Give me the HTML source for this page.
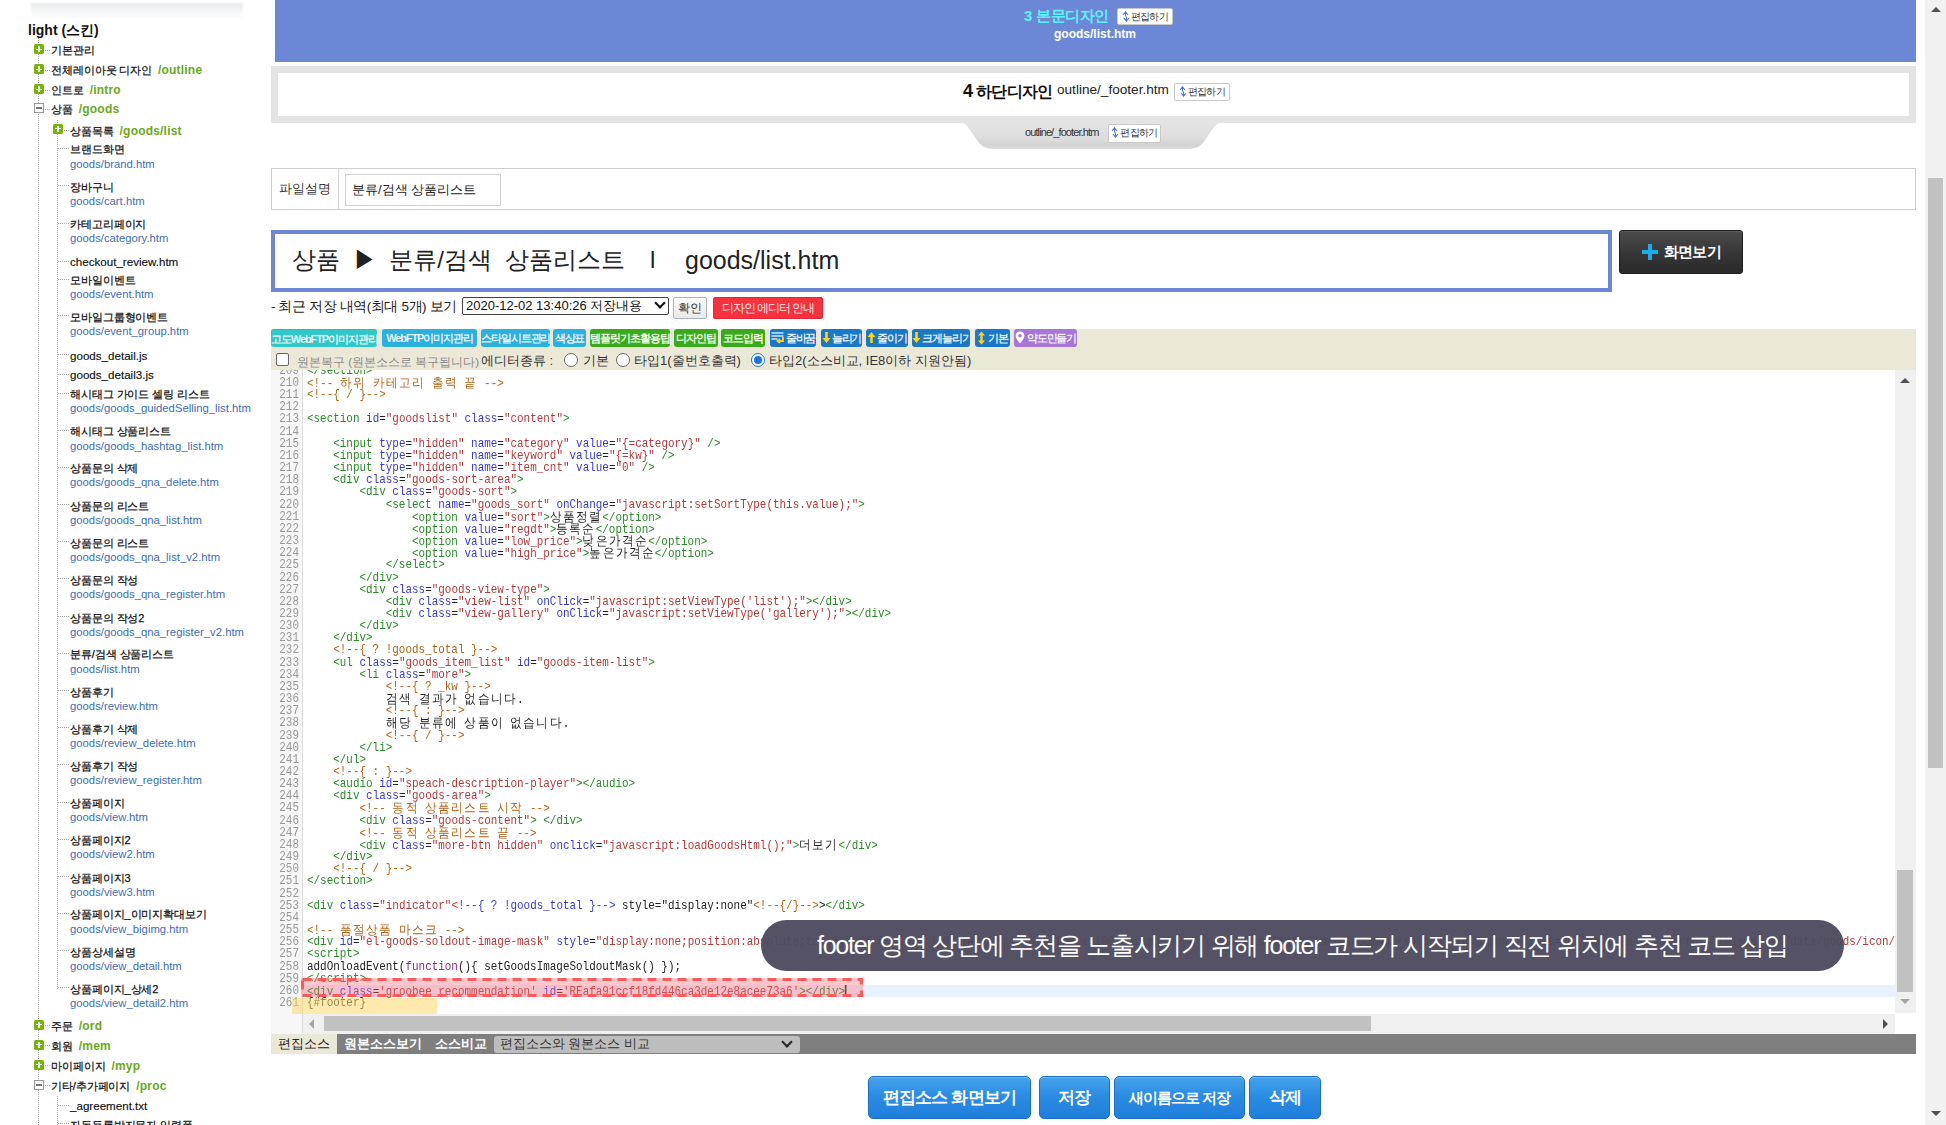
<!DOCTYPE html>
<html lang="ko">
<head>
<meta charset="utf-8">
<title>design editor</title>
<style>
*{box-sizing:border-box;margin:0;padding:0}
html,body{width:1946px;height:1125px;overflow:hidden;background:#fff}
body{position:relative;font-family:"Liberation Sans",sans-serif;color:#222}
.abs{position:absolute}
/* sidebar */
#shadow{position:absolute;left:31px;top:3px;width:212px;height:15px;background:linear-gradient(#e9eaeb,#eeeff0 30%,#f7f7f8 65%,#fdfdfd);filter:blur(1.2px)}
#skin{position:absolute;left:28px;top:21px;font-size:14px;font-weight:bold;color:#111;line-height:18px;white-space:nowrap}
.vl{position:absolute;border-left:1px dotted #a8a8a8;width:0}
.hd{position:absolute;border-top:1px dotted #a8a8a8;height:0}
.ic{position:absolute;width:10px;height:10px}
.ic.plus{background:#74b40c;border-radius:1.5px}
.ic.plus:before{content:"";position:absolute;left:2px;top:4.5px;width:6px;height:1.3px;background:#f4ffe8}
.ic.plus:after{content:"";position:absolute;left:4.4px;top:2px;width:1.3px;height:6px;background:#f4ffe8}
.ic.minus{background:#fff;border:1px solid #999}
.ic.minus:before{content:"";position:absolute;left:1px;top:3px;width:6px;height:2px;background:#777}
.st{position:absolute;white-space:nowrap;line-height:16px}
.n1{font-size:11px;color:#111;letter-spacing:-0.1px;-webkit-text-stroke:0.25px #111}
.gp{color:#6aa81c;font-weight:bold;font-size:12px;letter-spacing:0.2px;margin-left:3px;-webkit-text-stroke:0}
.n2{font-size:11px;color:#111;letter-spacing:-0.1px;-webkit-text-stroke:0.25px #111}
.n3{font-size:11.6px;color:#111;-webkit-text-stroke:0.15px #111}
.fn{font-size:11.3px;color:#3f6eb3;line-height:14px}

/* main */
#blue{position:absolute;left:275px;top:0;width:1641px;height:62px;background:#6c87d6}
#h3t{position:absolute;left:1024px;top:6px;font-size:15px;font-weight:bold;color:#5ef2ff;white-space:nowrap;line-height:20px;letter-spacing:-0.4px}
.edbtn{position:absolute;background:#fff;border:1px solid #c8c8c8;border-radius:2px;font-size:9.5px;color:#333;line-height:15px;white-space:nowrap;text-align:center;letter-spacing:-0.6px;overflow:hidden}
.edbtn i{font-style:normal;color:#5b7bd8;font-size:9px}
#h3f{position:absolute;left:1054px;top:26px;font-size:12px;font-weight:bold;color:#fff;white-space:nowrap;line-height:16px}
#gframe{position:absolute;left:271px;top:66px;width:1645px;height:57px;border:7px solid #e4e4e4;background:#fff}
#h4t{position:absolute;left:963px;top:81px;font-size:16px;font-weight:bold;color:#111;white-space:nowrap;line-height:20px;letter-spacing:-0.7px}
#h4f{position:absolute;left:1057px;top:82px;font-size:13.6px;color:#222;white-space:nowrap;line-height:16px}
#tabt{position:absolute;left:1025px;top:125px;font-size:11px;color:#333;letter-spacing:-0.9px;white-space:nowrap;line-height:14px}

#fdesc{position:absolute;left:271px;top:168px;width:1645px;height:42px;border:1px solid #cfcfcf;background:#fff}
#fdesc .lab{position:absolute;left:0;top:0;width:67px;height:40px;border-right:1px solid #d6d6d6;font-size:13px;color:#333;line-height:40px;padding-left:7px}
#fdesc .inp{position:absolute;left:73px;top:5px;width:156px;height:32px;border:1px solid #d2d2d2;font-size:13px;color:#222;line-height:30px;padding-left:6px;white-space:nowrap}

#title{position:absolute;left:271px;top:230px;width:1341px;height:62px;border:4px solid #6c87d6;background:#fff}
#title .t{position:absolute;left:17px;top:12px;font-size:24px;color:#222;white-space:nowrap;line-height:28px;word-spacing:6px}
#viewbtn{position:absolute;left:1619px;top:230px;width:124px;height:44px;border:1px solid #1e1e1e;border-radius:3px;background:linear-gradient(#4c4c4c,#353535 55%,#2b2b2b);box-shadow:inset 0 1px 0 #5a5a5a}
#viewbtn .p{position:absolute;left:22px;top:13px;width:16px;height:16px}
#viewbtn .p:before{content:"";position:absolute;left:6px;top:0;width:4px;height:16px;background:#1aaef0}
#viewbtn .p:after{content:"";position:absolute;left:0;top:6px;width:16px;height:4px;background:#1aaef0}
#viewbtn .tx{position:absolute;left:44px;top:11px;letter-spacing:-0.8px;font-size:15px;font-weight:bold;color:#fff;line-height:20px;white-space:nowrap}

#recent{position:absolute;left:271px;top:298px;letter-spacing:-0.4px;font-size:13.5px;color:#222;white-space:nowrap;line-height:18px}
#sel{position:absolute;left:462px;top:297px;width:207px;height:18px;border:1px solid #444;border-radius:2px;background:#fff;font-size:13px;letter-spacing:0;overflow:hidden;line-height:16px;padding-left:3px;white-space:nowrap;color:#111}
#sel .chev{position:absolute;right:4px;top:4px;width:8px;height:8px;border-right:2px solid #111;border-bottom:2px solid #111;transform:rotate(45deg);top:1px}
#okbtn{position:absolute;left:673px;top:297px;width:34px;height:22px;border:1px solid #a9b3bf;border-radius:2px;background:linear-gradient(#fbfbfb,#e9e9e9);font-size:12px;color:#333;line-height:20px;text-align:center}
#redbtn{position:absolute;left:713px;top:297px;width:110px;height:22px;background:#f5323e;border:1px solid #e02632;border-radius:2px;font-size:12px;color:#ffe8e8;line-height:20px;text-align:center;white-space:nowrap;letter-spacing:-1px;overflow:hidden}

#beige{position:absolute;left:271px;top:329px;width:1645px;height:41px;background:#ebe8d8}
.tb{position:absolute;top:329px;height:18px;border-radius:3px;color:rgba(255,255,255,0.88);font-size:11px;font-weight:bold;line-height:18px;text-align:center;white-space:nowrap;letter-spacing:-1.1px;overflow:hidden}
.tb.c1{background:#33c8c8;border-top:1px solid #22bfc0}
.tb.c2{background:#2cb0dd}
.tb.c3{background:#3aaa1c;color:#eaffe0}
.tb.c4{background:#1a78c6}
.tb.c5{background:#a677d4}
.tb .ar{color:#ffd21a;font-weight:bold}

#ckrow{position:absolute;left:271px;top:348px;height:22px;width:800px;white-space:nowrap}
#cb{position:absolute;left:5px;top:5px;width:13px;height:13px;border:1px solid #666;border-radius:2px;background:#fff}
#ckrow .g{position:absolute;left:26px;top:4.5px;font-size:11.5px;color:#8a8a8a;line-height:18px}
#ckrow .k{position:absolute;top:3.5px;font-size:13px;color:#333;line-height:18px}
.rd{position:absolute;top:5px;width:14px;height:14px;border:1px solid #666;border-radius:50%;background:#fff}
.rd.on{border-color:#1a73e8;border-width:1px}
.rd.on:after{content:"";position:absolute;left:2px;top:2px;width:8px;height:8px;border-radius:50%;background:#1a73e8}

/* editor */
#editor{position:absolute;left:271px;top:370px;width:1645px;height:664px;background:#fff;overflow:hidden}
#gutter{position:absolute;left:0;top:0;width:32px;height:664px;background:#f7f7f7;border-right:1px solid #ddd}
#gnums{position:absolute;left:0;top:-5.15px;width:28px;text-align:right}
.gn{height:12.17px;line-height:12.17px;font-family:"Liberation Mono",monospace;font-size:13.5px;color:#999;transform:scaleX(0.81);transform-origin:100% 0}
#codewrap{position:absolute;left:36.2px;top:-5.15px;transform:scaleX(0.81);transform-origin:0 0}
.ln{height:12.17px;line-height:12.17px;font-family:"Liberation Mono",monospace;font-size:13.5px;color:#222;white-space:pre}
.ln b.w{display:inline-block;width:16.2px;font-weight:normal;text-align:left;font-family:"Liberation Sans",sans-serif;font-size:12.5px;transform:scaleX(1.1);transform-origin:0 0}
.cur{display:inline-block;width:1.6px;height:11px;background:#222;vertical-align:-1px}
.t{color:#2a8a2a}.a{color:#3a3ad0}.s{color:#b33a3a}.c{color:#b06418}.k{color:#83308a}.e{color:#f22}
#actline{position:absolute;left:32px;top:615px;width:1592px;height:12px;background:#e8f2ff}
#vscroll{position:absolute;left:1624px;top:0;width:21px;height:643px;background:#f0f0f0}
#vthumb{position:absolute;left:2px;top:500px;width:16px;height:122px;background:#c1c1c1}
.tri-up{position:absolute;width:0;height:0;border-left:5px solid transparent;border-right:5px solid transparent;border-bottom:5px solid #505050}
.tri-dn{position:absolute;width:0;height:0;border-left:5px solid transparent;border-right:5px solid transparent;border-top:5px solid #a3a3a3}
#hscroll{position:absolute;left:32px;top:644px;width:1592px;height:20px;background:#f0f0f0}
#hthumb{position:absolute;left:21px;top:2px;width:1047px;height:15px;background:#c1c1c1}
.tri-l{position:absolute;width:0;height:0;border-top:5px solid transparent;border-bottom:5px solid transparent;border-right:5px solid #a3a3a3}
.tri-r{position:absolute;width:0;height:0;border-top:5px solid transparent;border-bottom:5px solid transparent;border-left:5px solid #505050}

#redbox{position:absolute;left:301px;top:978px;width:562px;height:19px;background:rgba(255,110,120,0.38)}
#redbox svg{position:absolute;left:0;top:0}
#yel{position:absolute;left:292px;top:998px;width:145px;height:16px;background:rgba(253,216,110,0.55)}
#pill{position:absolute;left:761px;top:920px;width:1083px;height:51px;border-radius:26px;background:rgba(77,75,94,0.96)}
#pill .tx{position:absolute;left:56px;top:9.5px;font-size:25px;color:#fff;white-space:nowrap;line-height:30px;letter-spacing:-1.25px}

/* bottom bar */
#bbar{position:absolute;left:271px;top:1034px;width:1645px;height:20px;background:#7f7f7f}
#bbar .tab1{position:absolute;left:0;top:0;width:66px;height:20px;background:#ebe8d8;font-size:13px;color:#222;line-height:20px;padding-left:7px;white-space:nowrap}
#bbar .tab{position:absolute;top:0;font-size:13px;font-weight:bold;color:#fff;line-height:20px;white-space:nowrap}
#bsel{position:absolute;left:223px;top:2px;width:306px;height:17px;border-radius:3px;background:#bdbdbd;font-size:12.5px;color:#333;line-height:17px;padding-left:6px;white-space:nowrap}
#bsel .chev{position:absolute;right:9px;top:2px;width:8px;height:8px;border-right:2px solid #222;border-bottom:2px solid #222;transform:rotate(45deg)}

.bb{position:absolute;top:1076px;height:43px;border:1px solid #1d6fc4;border-radius:5px;background:linear-gradient(#46a4ec,#2b8ce3 45%,#1f7fdc);box-shadow:inset 0 1px 0 #6ab8f2;color:#fff;font-weight:bold;font-size:17px;line-height:41px;text-align:center;white-space:nowrap;letter-spacing:-0.8px;overflow:hidden}

/* page scrollbar */
#pscroll{position:absolute;left:1925px;top:0;width:21px;height:1125px;background:#f1f1f1}
#pthumb{position:absolute;left:3px;top:178px;width:15px;height:590px;background:#c1c1c1}
</style>
</head>
<body>
<div id="shadow"></div>
<div id="skin">light (스킨)</div>
<div class="vl" style="left:38px;top:38px;height:1087px"></div>
<div class="vl" style="left:57px;top:120px;height:869px"></div>
<div class="vl" style="left:57px;top:1096px;height:29px"></div>
<div class="ic plus" style="left:34px;top:44.2px"></div>
<div class="hd" style="left:45px;top:49.7px;width:5px"></div>
<div class="st n1" style="left:51px;top:42.2px">기본관리</div>
<div class="ic plus" style="left:34px;top:64.2px"></div>
<div class="hd" style="left:45px;top:69.7px;width:5px"></div>
<div class="st n1" style="left:51px;top:62.2px">전체레이아웃 디자인 <span class="gp">/outline</span></div>
<div class="ic plus" style="left:34px;top:84.2px"></div>
<div class="hd" style="left:45px;top:89.7px;width:5px"></div>
<div class="st n1" style="left:51px;top:82.2px">인트로 <span class="gp">/intro</span></div>
<div class="ic minus" style="left:34px;top:103.4px"></div>
<div class="hd" style="left:45px;top:108.9px;width:5px"></div>
<div class="st n1" style="left:51px;top:101.4px">상품 <span class="gp">/goods</span></div>
<div class="ic plus" style="left:53px;top:123.7px"></div>
<div class="hd" style="left:64px;top:129.7px;width:5px"></div>
<div class="st n1" style="left:70px;top:122.7px">상품목록 <span class="gp">/goods/list</span></div>
<div class="hd" style="left:58px;top:147.8px;width:11px"></div>
<div class="st n2" style="left:70px;top:141.3px">브랜드화면</div>
<div class="st fn" style="left:70px;top:156.5px">goods/brand.htm</div>
<div class="hd" style="left:58px;top:185.2px;width:11px"></div>
<div class="st n2" style="left:70px;top:178.7px">장바구니</div>
<div class="st fn" style="left:70px;top:193.9px">goods/cart.htm</div>
<div class="hd" style="left:58px;top:222.5px;width:11px"></div>
<div class="st n2" style="left:70px;top:216.0px">카테고리페이지</div>
<div class="st fn" style="left:70px;top:231.2px">goods/category.htm</div>
<div class="hd" style="left:58px;top:260.6px;width:11px"></div>
<div class="st n3" style="left:70px;top:254.1px">checkout_review.htm</div>
<div class="hd" style="left:58px;top:278.5px;width:11px"></div>
<div class="st n2" style="left:70px;top:272.0px">모바일이벤트</div>
<div class="st fn" style="left:70px;top:287.2px">goods/event.htm</div>
<div class="hd" style="left:58px;top:315.2px;width:11px"></div>
<div class="st n2" style="left:70px;top:308.7px">모바일그룹형이벤트</div>
<div class="st fn" style="left:70px;top:323.9px">goods/event_group.htm</div>
<div class="hd" style="left:58px;top:354.4px;width:11px"></div>
<div class="st n3" style="left:70px;top:347.9px">goods_detail.js</div>
<div class="hd" style="left:58px;top:373.8px;width:11px"></div>
<div class="st n3" style="left:70px;top:367.3px">goods_detail3.js</div>
<div class="hd" style="left:58px;top:392.5px;width:11px"></div>
<div class="st n2" style="left:70px;top:386.0px">해시태그 가이드 셀링 리스트</div>
<div class="st fn" style="left:70px;top:401.2px">goods/goods_guidedSelling_list.htm</div>
<div class="hd" style="left:58px;top:429.8px;width:11px"></div>
<div class="st n2" style="left:70px;top:423.3px">해시태그 상품리스트</div>
<div class="st fn" style="left:70px;top:438.5px">goods/goods_hashtag_list.htm</div>
<div class="hd" style="left:58px;top:466.6px;width:11px"></div>
<div class="st n2" style="left:70px;top:460.1px">상품문의 삭제</div>
<div class="st fn" style="left:70px;top:475.3px">goods/goods_qna_delete.htm</div>
<div class="hd" style="left:58px;top:504.0px;width:11px"></div>
<div class="st n2" style="left:70px;top:497.5px">상품문의 리스트</div>
<div class="st fn" style="left:70px;top:512.7px">goods/goods_qna_list.htm</div>
<div class="hd" style="left:58px;top:541.3px;width:11px"></div>
<div class="st n2" style="left:70px;top:534.8px">상품문의 리스트</div>
<div class="st fn" style="left:70px;top:550.0px">goods/goods_qna_list_v2.htm</div>
<div class="hd" style="left:58px;top:578.3px;width:11px"></div>
<div class="st n2" style="left:70px;top:571.8px">상품문의 작성</div>
<div class="st fn" style="left:70px;top:587.0px">goods/goods_qna_register.htm</div>
<div class="hd" style="left:58px;top:616.0px;width:11px"></div>
<div class="st n2" style="left:70px;top:609.5px">상품문의 작성2</div>
<div class="st fn" style="left:70px;top:624.7px">goods/goods_qna_register_v2.htm</div>
<div class="hd" style="left:58px;top:652.8px;width:11px"></div>
<div class="st n2" style="left:70px;top:646.3px">분류/검색 상품리스트</div>
<div class="st fn" style="left:70px;top:661.5px">goods/list.htm</div>
<div class="hd" style="left:58px;top:690.0px;width:11px"></div>
<div class="st n2" style="left:70px;top:683.5px">상품후기</div>
<div class="st fn" style="left:70px;top:698.7px">goods/review.htm</div>
<div class="hd" style="left:58px;top:727.0px;width:11px"></div>
<div class="st n2" style="left:70px;top:720.5px">상품후기 삭제</div>
<div class="st fn" style="left:70px;top:735.7px">goods/review_delete.htm</div>
<div class="hd" style="left:58px;top:764.4px;width:11px"></div>
<div class="st n2" style="left:70px;top:757.9px">상품후기 작성</div>
<div class="st fn" style="left:70px;top:773.1px">goods/review_register.htm</div>
<div class="hd" style="left:58px;top:801.5px;width:11px"></div>
<div class="st n2" style="left:70px;top:795.0px">상품페이지</div>
<div class="st fn" style="left:70px;top:810.2px">goods/view.htm</div>
<div class="hd" style="left:58px;top:838.7px;width:11px"></div>
<div class="st n2" style="left:70px;top:832.2px">상품페이지2</div>
<div class="st fn" style="left:70px;top:847.4px">goods/view2.htm</div>
<div class="hd" style="left:58px;top:876.0px;width:11px"></div>
<div class="st n2" style="left:70px;top:869.5px">상품페이지3</div>
<div class="st fn" style="left:70px;top:884.7px">goods/view3.htm</div>
<div class="hd" style="left:58px;top:912.9px;width:11px"></div>
<div class="st n2" style="left:70px;top:906.4px">상품페이지_이미지확대보기</div>
<div class="st fn" style="left:70px;top:921.6px">goods/view_bigimg.htm</div>
<div class="hd" style="left:58px;top:950.2px;width:11px"></div>
<div class="st n2" style="left:70px;top:943.7px">상품상세설명</div>
<div class="st fn" style="left:70px;top:958.9px">goods/view_detail.htm</div>
<div class="hd" style="left:58px;top:987.2px;width:11px"></div>
<div class="st n2" style="left:70px;top:980.7px">상품페이지_상세2</div>
<div class="st fn" style="left:70px;top:995.9px">goods/view_detail2.htm</div>
<div class="ic plus" style="left:34px;top:1019.5px"></div>
<div class="hd" style="left:45px;top:1025.0px;width:5px"></div>
<div class="st n1" style="left:51px;top:1017.5px">주문 <span class="gp">/ord</span></div>
<div class="ic plus" style="left:34px;top:1039.5px"></div>
<div class="hd" style="left:45px;top:1045.0px;width:5px"></div>
<div class="st n1" style="left:51px;top:1037.5px">회원 <span class="gp">/mem</span></div>
<div class="ic plus" style="left:34px;top:1059.5px"></div>
<div class="hd" style="left:45px;top:1065.0px;width:5px"></div>
<div class="st n1" style="left:51px;top:1057.5px">마이페이지 <span class="gp">/myp</span></div>
<div class="ic minus" style="left:34px;top:1079.6px"></div>
<div class="hd" style="left:45px;top:1085.1px;width:5px"></div>
<div class="st n1" style="left:51px;top:1077.6px">기타/추가페이지 <span class="gp">/proc</span></div>
<div class="hd" style="left:58px;top:1104.6px;width:11px"></div>
<div class="st n3" style="left:70px;top:1098.1px">_agreement.txt</div>
<div class="hd" style="left:58px;top:1123.0px;width:11px"></div>
<div class="st n2" style="left:70px;top:1116.5px">자동등록방지문자 입력폼</div>

<div id="blue"></div>
<div id="h3t"><span style="margin-right:4px">3</span>본문디자인</div>
<div class="edbtn" style="left:1117px;top:8px;width:56px;height:17px"><svg width="8" height="11" style="vertical-align:-2px;margin-right:1px"><path d="M1,4 L3.5,0.8 L6,4 M3.5,1 v4.5 M2,7 L4.5,10.2 L7,7 M4.5,10 v-4.5" stroke="#4f78d8" stroke-width="1.1" fill="none"/></svg>편집하기</div>
<div id="h3f">goods/list.htm</div>

<div id="gframe"></div>
<div id="h4t"><span style="margin-right:3px;font-size:18px;letter-spacing:0">4</span>하단디자인</div>
<div id="h4f">outline/_footer.htm</div>
<div class="edbtn" style="left:1174px;top:83px;width:56px;height:18px"><svg width="8" height="11" style="vertical-align:-2px;margin-right:1px"><path d="M1,4 L3.5,0.8 L6,4 M3.5,1 v4.5 M2,7 L4.5,10.2 L7,7 M4.5,10 v-4.5" stroke="#4f78d8" stroke-width="1.1" fill="none"/></svg>편집하기</div>
<svg style="position:absolute;left:950px;top:121px" width="290" height="32"><defs><linearGradient id="tg" x1="0" y1="0" x2="0" y2="1"><stop offset="0" stop-color="#e4e4e4"/><stop offset="0.55" stop-color="#dedede"/><stop offset="0.85" stop-color="#d3d3d3"/><stop offset="1" stop-color="#dcdcdc"/></linearGradient><filter id="tb1" x="-5%" y="-20%" width="110%" height="140%"><feGaussianBlur stdDeviation="0.6"/></filter></defs><path d="M9,1 L276,1 C268,1 265,4 259,13 C253,23 249,28 238,28 L44,28 C33,28 29,23 23,13 C17,4 14,1 9,1 Z" fill="url(#tg)" filter="url(#tb1)"/></svg>
<div id="tabt">outline/_footer.htm</div>
<div class="edbtn" style="left:1108px;top:124px;width:53px;height:19px"><svg width="8" height="11" style="vertical-align:-2px;margin-right:1px"><path d="M1,4 L3.5,0.8 L6,4 M3.5,1 v4.5 M2,7 L4.5,10.2 L7,7 M4.5,10 v-4.5" stroke="#4f78d8" stroke-width="1.1" fill="none"/></svg>편집하기</div>

<div id="fdesc"><div class="lab">파일설명</div><div class="inp">분류/검색 상품리스트</div></div>

<div id="title"><div class="t">상품 ▶ 분류/검색 상품리스트 &nbsp;l</div><div class="t" style="left:410px;font-size:25px;word-spacing:0">goods/list.htm</div></div>
<div id="viewbtn"><div class="p"></div><div class="tx">화면보기</div></div>

<div id="recent">- 최근 저장 내역(최대 5개) 보기</div>
<div id="sel">2020-12-02 13:40:26 저장내용<div class="chev"></div></div>
<div id="okbtn">확인</div>
<div id="redbtn">디자인 에디터 안내</div>

<div id="beige"></div>
<div class="tb c1" style="left:271px;width:106px">고도WebFTP이미지관리</div>
<div class="tb c2" style="left:382px;width:95px">WebFTP이미지관리</div>
<div class="tb c2" style="left:481px;width:69px">스타일시트관리</div>
<div class="tb c2" style="left:553px;width:33px">색상표</div>
<div class="tb c3" style="left:590px;width:80px">템플릿기초활용팁</div>
<div class="tb c3" style="left:674px;width:44px">디자인팁</div>
<div class="tb c3" style="left:721px;width:44px">코드입력</div>
<div class="tb c4" style="left:770px;width:46px"><svg width="14" height="13" style="vertical-align:-2px;margin-right:1px"><path d="M0.5,2 h12 M0.5,5 h12 M0.5,8 h6" stroke="#cfe6ff" stroke-width="1.6"/><path d="M12,6 v4 h-5 M9,8 l-2.5,2 l2.5,2" stroke="#ffd21a" stroke-width="1.8" fill="none"/></svg>줄바꿈</div>
<div class="tb c4" style="left:821px;width:41px"><svg width="9" height="13" style="vertical-align:-2px;margin-right:1px"><path d="M3.2,1 h2.6 v6 h2.7 L4.5,12 L0.5,7 h2.7 z" fill="#ffd21a"/></svg>늘리기</div>
<div class="tb c4" style="left:866px;width:42px"><svg width="9" height="13" style="vertical-align:-2px;margin-right:1px"><path d="M3.2,12 h2.6 v-6 h2.7 L4.5,1 L0.5,6 h2.7 z" fill="#ffd21a"/></svg>줄이기</div>
<div class="tb c4" style="left:912px;width:58px"><svg width="9" height="13" style="vertical-align:-2px;margin-right:1px"><path d="M3.2,1 h2.6 v6 h2.7 L4.5,12 L0.5,7 h2.7 z" fill="#ffd21a"/></svg>크게늘리기</div>
<div class="tb c4" style="left:975px;width:35px"><svg width="9" height="14" style="vertical-align:-3px;margin-right:2px"><path d="M4.5,0.5 L8,4.5 h-2.3 v5 h2.3 L4.5,13.5 L1,9.5 h2.3 v-5 h-2.3 z" fill="#ffd21a"/></svg>기본</div>
<div class="tb c5" style="left:1014px;width:63px"><svg width="10" height="13" style="vertical-align:-2px;margin-right:2px"><path d="M5,0.5 C2.2,0.5 0.6,2.5 0.6,4.8 C0.6,7.8 5,12.5 5,12.5 C5,12.5 9.4,7.8 9.4,4.8 C9.4,2.5 7.8,0.5 5,0.5 z M5,3 a1.8,1.8 0 1,1 0,3.6 a1.8,1.8 0 1,1 0,-3.6 z" fill="#fff" fill-rule="evenodd"/></svg>약도만들기</div>

<div id="ckrow">
  <div id="cb"></div>
  <div class="g">원본복구 (원본소스로 복구됩니다)</div>
  <div class="k" style="left:210px">에디터종류 :</div>
  <div class="rd" style="left:293px"></div><div class="k" style="left:312px">기본</div>
  <div class="rd" style="left:345px"></div><div class="k" style="left:363px">타입1(줄번호출력)</div>
  <div class="rd on" style="left:480px"></div><div class="k" style="left:498px">타입2(소스비교, IE8이하 지원안됨)</div>
</div>

<div id="editor">
  <div id="gutter"><div id="gnums">
<div class="gn">209</div>
<div class="gn">210</div>
<div class="gn">211</div>
<div class="gn">212</div>
<div class="gn">213</div>
<div class="gn">214</div>
<div class="gn">215</div>
<div class="gn">216</div>
<div class="gn">217</div>
<div class="gn">218</div>
<div class="gn">219</div>
<div class="gn">220</div>
<div class="gn">221</div>
<div class="gn">222</div>
<div class="gn">223</div>
<div class="gn">224</div>
<div class="gn">225</div>
<div class="gn">226</div>
<div class="gn">227</div>
<div class="gn">228</div>
<div class="gn">229</div>
<div class="gn">230</div>
<div class="gn">231</div>
<div class="gn">232</div>
<div class="gn">233</div>
<div class="gn">234</div>
<div class="gn">235</div>
<div class="gn">236</div>
<div class="gn">237</div>
<div class="gn">238</div>
<div class="gn">239</div>
<div class="gn">240</div>
<div class="gn">241</div>
<div class="gn">242</div>
<div class="gn">243</div>
<div class="gn">244</div>
<div class="gn">245</div>
<div class="gn">246</div>
<div class="gn">247</div>
<div class="gn">248</div>
<div class="gn">249</div>
<div class="gn">250</div>
<div class="gn">251</div>
<div class="gn">252</div>
<div class="gn">253</div>
<div class="gn">254</div>
<div class="gn">255</div>
<div class="gn">256</div>
<div class="gn">257</div>
<div class="gn">258</div>
<div class="gn">259</div>
<div class="gn">260</div>
<div class="gn">261</div>
  </div></div>
  <div id="actline"></div>
  <div id="codewrap">
<div class="ln"><span class="t">&lt;/section&gt;</span></div>
<div class="ln"><span class="c">&lt;!-- <b class="w">하</b><b class="w">위</b> <b class="w">카</b><b class="w">테</b><b class="w">고</b><b class="w">리</b> <b class="w">출</b><b class="w">력</b> <b class="w">끝</b> --&gt;</span></div>
<div class="ln"><span class="c">&lt;!--{ / }--&gt;</span></div>
<div class="ln">&#8203;</div>
<div class="ln"><span class="t">&lt;section</span> <span class="a">id</span>=<span class="s">"goodslist"</span> <span class="a">class</span>=<span class="s">"content"</span><span class="t">&gt;</span></div>
<div class="ln">&#8203;</div>
<div class="ln">    <span class="t">&lt;input</span> <span class="a">type</span>=<span class="s">"hidden"</span> <span class="a">name</span>=<span class="s">"category"</span> <span class="a">value</span>=<span class="s">"{=category}"</span> <span class="t">/&gt;</span></div>
<div class="ln">    <span class="t">&lt;input</span> <span class="a">type</span>=<span class="s">"hidden"</span> <span class="a">name</span>=<span class="s">"keyword"</span> <span class="a">value</span>=<span class="s">"{=kw}"</span> <span class="t">/&gt;</span></div>
<div class="ln">    <span class="t">&lt;input</span> <span class="a">type</span>=<span class="s">"hidden"</span> <span class="a">name</span>=<span class="s">"item_cnt"</span> <span class="a">value</span>=<span class="s">"0"</span> <span class="t">/&gt;</span></div>
<div class="ln">    <span class="t">&lt;div</span> <span class="a">class</span>=<span class="s">"goods-sort-area"</span><span class="t">&gt;</span></div>
<div class="ln">        <span class="t">&lt;div</span> <span class="a">class</span>=<span class="s">"goods-sort"</span><span class="t">&gt;</span></div>
<div class="ln">            <span class="t">&lt;select</span> <span class="a">name</span>=<span class="s">"goods_sort"</span> <span class="a">onChange</span>=<span class="s">"javascript:setSortType(this.value);"</span><span class="t">&gt;</span></div>
<div class="ln">                <span class="t">&lt;option</span> <span class="a">value</span>=<span class="s">"sort"</span><span class="t">&gt;</span><b class="w">상</b><b class="w">품</b><b class="w">정</b><b class="w">렬</b><span class="t">&lt;/option&gt;</span></div>
<div class="ln">                <span class="t">&lt;option</span> <span class="a">value</span>=<span class="s">"regdt"</span><span class="t">&gt;</span><b class="w">등</b><b class="w">록</b><b class="w">순</b><span class="t">&lt;/option&gt;</span></div>
<div class="ln">                <span class="t">&lt;option</span> <span class="a">value</span>=<span class="s">"low_price"</span><span class="t">&gt;</span><b class="w">낮</b><b class="w">은</b><b class="w">가</b><b class="w">격</b><b class="w">순</b><span class="t">&lt;/option&gt;</span></div>
<div class="ln">                <span class="t">&lt;option</span> <span class="a">value</span>=<span class="s">"high_price"</span><span class="t">&gt;</span><b class="w">높</b><b class="w">은</b><b class="w">가</b><b class="w">격</b><b class="w">순</b><span class="t">&lt;/option&gt;</span></div>
<div class="ln">            <span class="t">&lt;/select&gt;</span></div>
<div class="ln">        <span class="t">&lt;/div&gt;</span></div>
<div class="ln">        <span class="t">&lt;div</span> <span class="a">class</span>=<span class="s">"goods-view-type"</span><span class="t">&gt;</span></div>
<div class="ln">            <span class="t">&lt;div</span> <span class="a">class</span>=<span class="s">"view-list"</span> <span class="a">onClick</span>=<span class="s">"javascript:setViewType('list');"</span><span class="t">&gt;&lt;/div&gt;</span></div>
<div class="ln">            <span class="t">&lt;div</span> <span class="a">class</span>=<span class="s">"view-gallery"</span> <span class="a">onClick</span>=<span class="s">"javascript:setViewType('gallery');"</span><span class="t">&gt;&lt;/div&gt;</span></div>
<div class="ln">        <span class="t">&lt;/div&gt;</span></div>
<div class="ln">    <span class="t">&lt;/div&gt;</span></div>
<div class="ln">    <span class="c">&lt;!--{ ? !goods_total }--&gt;</span></div>
<div class="ln">    <span class="t">&lt;ul</span> <span class="a">class</span>=<span class="s">"goods_item_list"</span> <span class="a">id</span>=<span class="s">"goods-item-list"</span><span class="t">&gt;</span></div>
<div class="ln">        <span class="t">&lt;li</span> <span class="a">class</span>=<span class="s">"more"</span><span class="t">&gt;</span></div>
<div class="ln">            <span class="c">&lt;!--{ ? _kw }--&gt;</span></div>
<div class="ln">            <b class="w">검</b><b class="w">색</b> <b class="w">결</b><b class="w">과</b><b class="w">가</b> <b class="w">없</b><b class="w">습</b><b class="w">니</b><b class="w">다</b>.</div>
<div class="ln">            <span class="c">&lt;!--{ : }--&gt;</span></div>
<div class="ln">            <b class="w">해</b><b class="w">당</b> <b class="w">분</b><b class="w">류</b><b class="w">에</b> <b class="w">상</b><b class="w">품</b><b class="w">이</b> <b class="w">없</b><b class="w">습</b><b class="w">니</b><b class="w">다</b>.</div>
<div class="ln">            <span class="c">&lt;!--{ / }--&gt;</span></div>
<div class="ln">        <span class="t">&lt;/li&gt;</span></div>
<div class="ln">    <span class="t">&lt;/ul&gt;</span></div>
<div class="ln">    <span class="c">&lt;!--{ : }--&gt;</span></div>
<div class="ln">    <span class="t">&lt;audio</span> <span class="a">id</span>=<span class="s">"speach-description-player"</span><span class="t">&gt;&lt;/audio&gt;</span></div>
<div class="ln">    <span class="t">&lt;div</span> <span class="a">class</span>=<span class="s">"goods-area"</span><span class="t">&gt;</span></div>
<div class="ln">        <span class="c">&lt;!-- <b class="w">동</b><b class="w">적</b> <b class="w">상</b><b class="w">품</b><b class="w">리</b><b class="w">스</b><b class="w">트</b> <b class="w">시</b><b class="w">작</b> --&gt;</span></div>
<div class="ln">        <span class="t">&lt;div</span> <span class="a">class</span>=<span class="s">"goods-content"</span><span class="t">&gt;</span> <span class="t">&lt;/div&gt;</span></div>
<div class="ln">        <span class="c">&lt;!-- <b class="w">동</b><b class="w">적</b> <b class="w">상</b><b class="w">품</b><b class="w">리</b><b class="w">스</b><b class="w">트</b> <b class="w">끝</b> --&gt;</span></div>
<div class="ln">        <span class="t">&lt;div</span> <span class="a">class</span>=<span class="s">"more-btn hidden"</span> <span class="a">onclick</span>=<span class="s">"javascript:loadGoodsHtml();"</span><span class="t">&gt;</span><b class="w">더</b><b class="w">보</b><b class="w">기</b><span class="t">&lt;/div&gt;</span></div>
<div class="ln">    <span class="t">&lt;/div&gt;</span></div>
<div class="ln">    <span class="c">&lt;!--{ / }--&gt;</span></div>
<div class="ln"><span class="t">&lt;/section&gt;</span></div>
<div class="ln">&#8203;</div>
<div class="ln"><span class="t">&lt;div</span> <span class="a">class</span>=<span class="s">"indicator"</span><span class="e">&lt;</span><span class="a">!--{ ? !goods_total }--&gt;</span> style="display:none"<span class="c">&lt;!--{/}--&gt;</span>&gt;<span class="t">&lt;/div&gt;</span></div>
<div class="ln">&#8203;</div>
<div class="ln"><span class="c">&lt;!-- <b class="w">품</b><b class="w">절</b><b class="w">상</b><b class="w">품</b> <b class="w">마</b><b class="w">스</b><b class="w">크</b> --&gt;</span></div>
<div class="ln"><span class="t">&lt;div</span> <span class="a">id</span>=<span class="s">"el-goods-soldout-image-mask"</span> <span class="a">style</span>=<span class="s">"display:none;position:absolute;top:0;left:0;width:100%;height:100%;z-index:100;"</span><span class="t">&gt;&lt;img</span> <span class="a">src</span>=<span class="s">"/data/skin/light/images/common/soldout_icon.png"</span> <span class="a">class</span>=<span class="s">"soldout_mask"</span> <span class="a">onerror</span>=<span class="s">"this.src='/data/goods/icon/</span></div>
<div class="ln"><span class="t">&lt;script&gt;</span></div>
<div class="ln">addOnloadEvent(<span class="k">function</span>(){ setGoodsImageSoldoutMask() });</div>
<div class="ln"><span class="t">&lt;/script&gt;</span></div>
<div class="ln"><span class="t">&lt;div</span> <span class="a">class</span>=<span class="s">'groobee_recommendation'</span> <span class="a">id</span>=<span class="s">'REafa91ccf18fd446ca3de12e8acee73a6'</span><span class="t">&gt;&lt;/div&gt;</span><span class="cur"></span></div>
<div class="ln">{#footer}</div>
  </div>
  <div id="vscroll"><div class="tri-up" style="left:5px;top:8px"></div><div id="vthumb"></div><div class="tri-dn" style="left:5px;top:629px"></div></div>
  <div id="hscroll"><div class="tri-l" style="left:6px;top:5px"></div><div id="hthumb"></div><div class="tri-r" style="left:1580px;top:5px"></div></div>
</div>

<div id="redbox"><svg width="562" height="19"><rect x="1.5" y="1.5" width="559" height="16" fill="none" stroke="#ff5a5a" stroke-width="3" stroke-dasharray="9 6"/></svg></div>
<div id="yel"></div>
<div id="pill"><div class="tx">footer 영역 상단에 추천을 노출시키기 위해 footer 코드가 시작되기 직전 위치에 추천 코드 삽입</div></div>

<div id="bbar">
  <div class="tab1">편집소스</div>
  <div class="tab" style="left:73px">원본소스보기</div>
  <div class="tab" style="left:164px">소스비교</div>
  <div id="bsel">편집소스와 원본소스 비교<div class="chev"></div></div>
</div>

<div class="bb" style="left:868px;width:163px">편집소스 화면보기</div>
<div class="bb" style="left:1039px;width:71px">저장</div>
<div class="bb" style="left:1114px;width:131px;font-size:15px;letter-spacing:-1px">새이름으로 저장</div>
<div class="bb" style="left:1249px;width:72px">삭제</div>

<div id="pscroll"><div class="tri-up" style="left:6px;top:7px"></div><div id="pthumb"></div><div class="tri-dn" style="left:6px;top:1111px;border-top-color:#505050"></div></div>
</body>
</html>
